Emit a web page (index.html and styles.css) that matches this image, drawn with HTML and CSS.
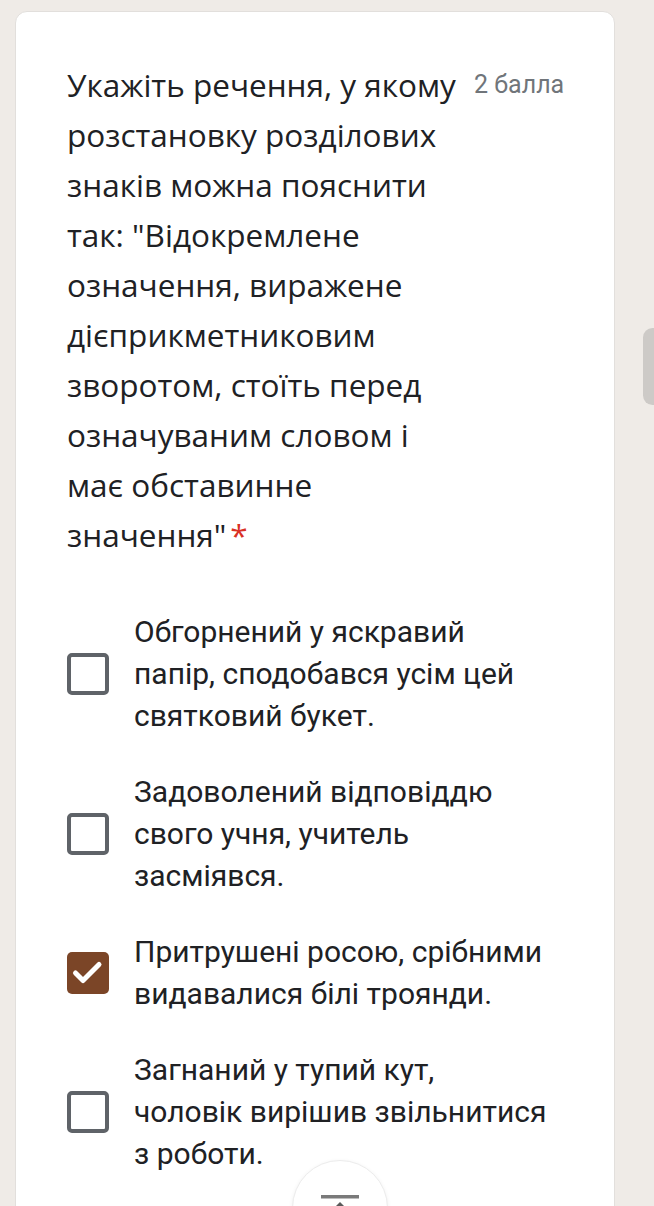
FILE: index.html
```html
<!DOCTYPE html>
<html lang="uk">
<head>
<meta charset="utf-8">
<title>Питання</title>
<link rel="stylesheet" href="styles.css">
</head>
<body>
<div class="page">
  <div class="card">
    <div class="question">
      <div class="title">Укажіть речення, у якому розстановку розділових знаків можна пояснити так: "Відокремлене означення, виражене дієприкметниковим зворотом, стоїть перед означуваним словом і має обставинне значення"<span class="req">*</span></div>
      <div class="points">2 балла</div>
    </div>
    <div class="options">
      <div class="option">
        <span class="box"></span>
        <span class="label">Обгорнений у яскравий<br>папір, сподобався усім цей<br>святковий букет.</span>
      </div>
      <div class="option">
        <span class="box"></span>
        <span class="label">Задоволений відповіддю<br>свого учня, учитель<br>засміявся.</span>
      </div>
      <div class="option">
        <span class="box checked"><svg viewBox="0 0 42 42" width="42" height="42"><path d="M8.5 21 L16 28.5 L32 12.5" fill="none" stroke="#fff" stroke-width="5" stroke-linecap="round" stroke-linejoin="round"/></svg></span>
        <span class="label">Притрушені росою, срібними<br>видавалися білі троянди.</span>
      </div>
      <div class="option">
        <span class="box"></span>
        <span class="label">Загнаний у тупий кут,<br>чоловік вирішив звільнитися<br>з роботи.</span>
      </div>
    </div>
  </div>
  <div class="scroll-thumb"></div>
  <button class="fab" aria-label="Вгору">
    <svg viewBox="0 0 40 40" width="40" height="40"><rect x="1" y="0" width="38" height="3.5" fill="#7a7a7a"/><path d="M20 7 L12 15 L28 15 Z" fill="#5a5a5a"/></svg>
  </button>
</div>
</body>
</html>
```
FILE: styles.css
```css
* { box-sizing: border-box; }
html, body { margin: 0; padding: 0; }
body {
  background: #efebe7;
  width: 654px;
  height: 1206px;
  overflow: hidden;
}
.page {
  position: relative;
  height: 1206px;
  overflow: hidden;
  padding: 11px 0 0 15px;
}
.card {
  width: 600px;
  height: 1300px;
  background: #fff;
  border: 1px solid #e2dfdc;
  border-radius: 12px;
  padding: 48px 20px 0 51px;
}
.question {
  display: flex;
  align-items: flex-start;
  gap: 7px;
}
.title {
  flex: none;
  width: 400px;
  font-family: "Open Sans", "Noto Sans", sans-serif;
  font-size: 31.5px;
  line-height: 50px;
  color: #202124;
}
.req {
  color: #d93025;
  margin-left: 4px;
}
.points {
  font-family: Roboto, "Liberation Sans", sans-serif;
  font-size: 25px;
  line-height: 50px;
  color: #70757a;
  white-space: nowrap;
}
.options {
  margin-top: 51px;
  display: flex;
  flex-direction: column;
  gap: 34px;
}
.option {
  display: flex;
  align-items: center;
  gap: 25px;
}
.box {
  flex: none;
  width: 42px;
  height: 42px;
  border: 4px solid #5f6368;
  border-radius: 5px;
}
.box.checked {
  border: none;
  background: #7b4527;
}
.box svg { display: block; }
.label {
  white-space: nowrap;
  font-family: Roboto, "Liberation Sans", sans-serif;
  font-size: 30px;
  line-height: 42px;
  color: #202124;
}
.scroll-thumb {
  position: absolute;
  right: -8px;
  top: 328px;
  width: 19px;
  height: 77px;
  border-radius: 10px;
  background: #cdcac7;
}
.fab {
  position: absolute;
  left: 292px;
  top: 1160px;
  width: 96px;
  height: 96px;
  border-radius: 50%;
  background: #fff;
  border: 1px solid #ececec;
  box-shadow: 0 1px 4px rgba(0,0,0,0.06);
  padding: 0;
  display: flex;
  justify-content: center;
  align-items: flex-start;
  padding-top: 34px;
}
.fab svg { display: block; }
```
